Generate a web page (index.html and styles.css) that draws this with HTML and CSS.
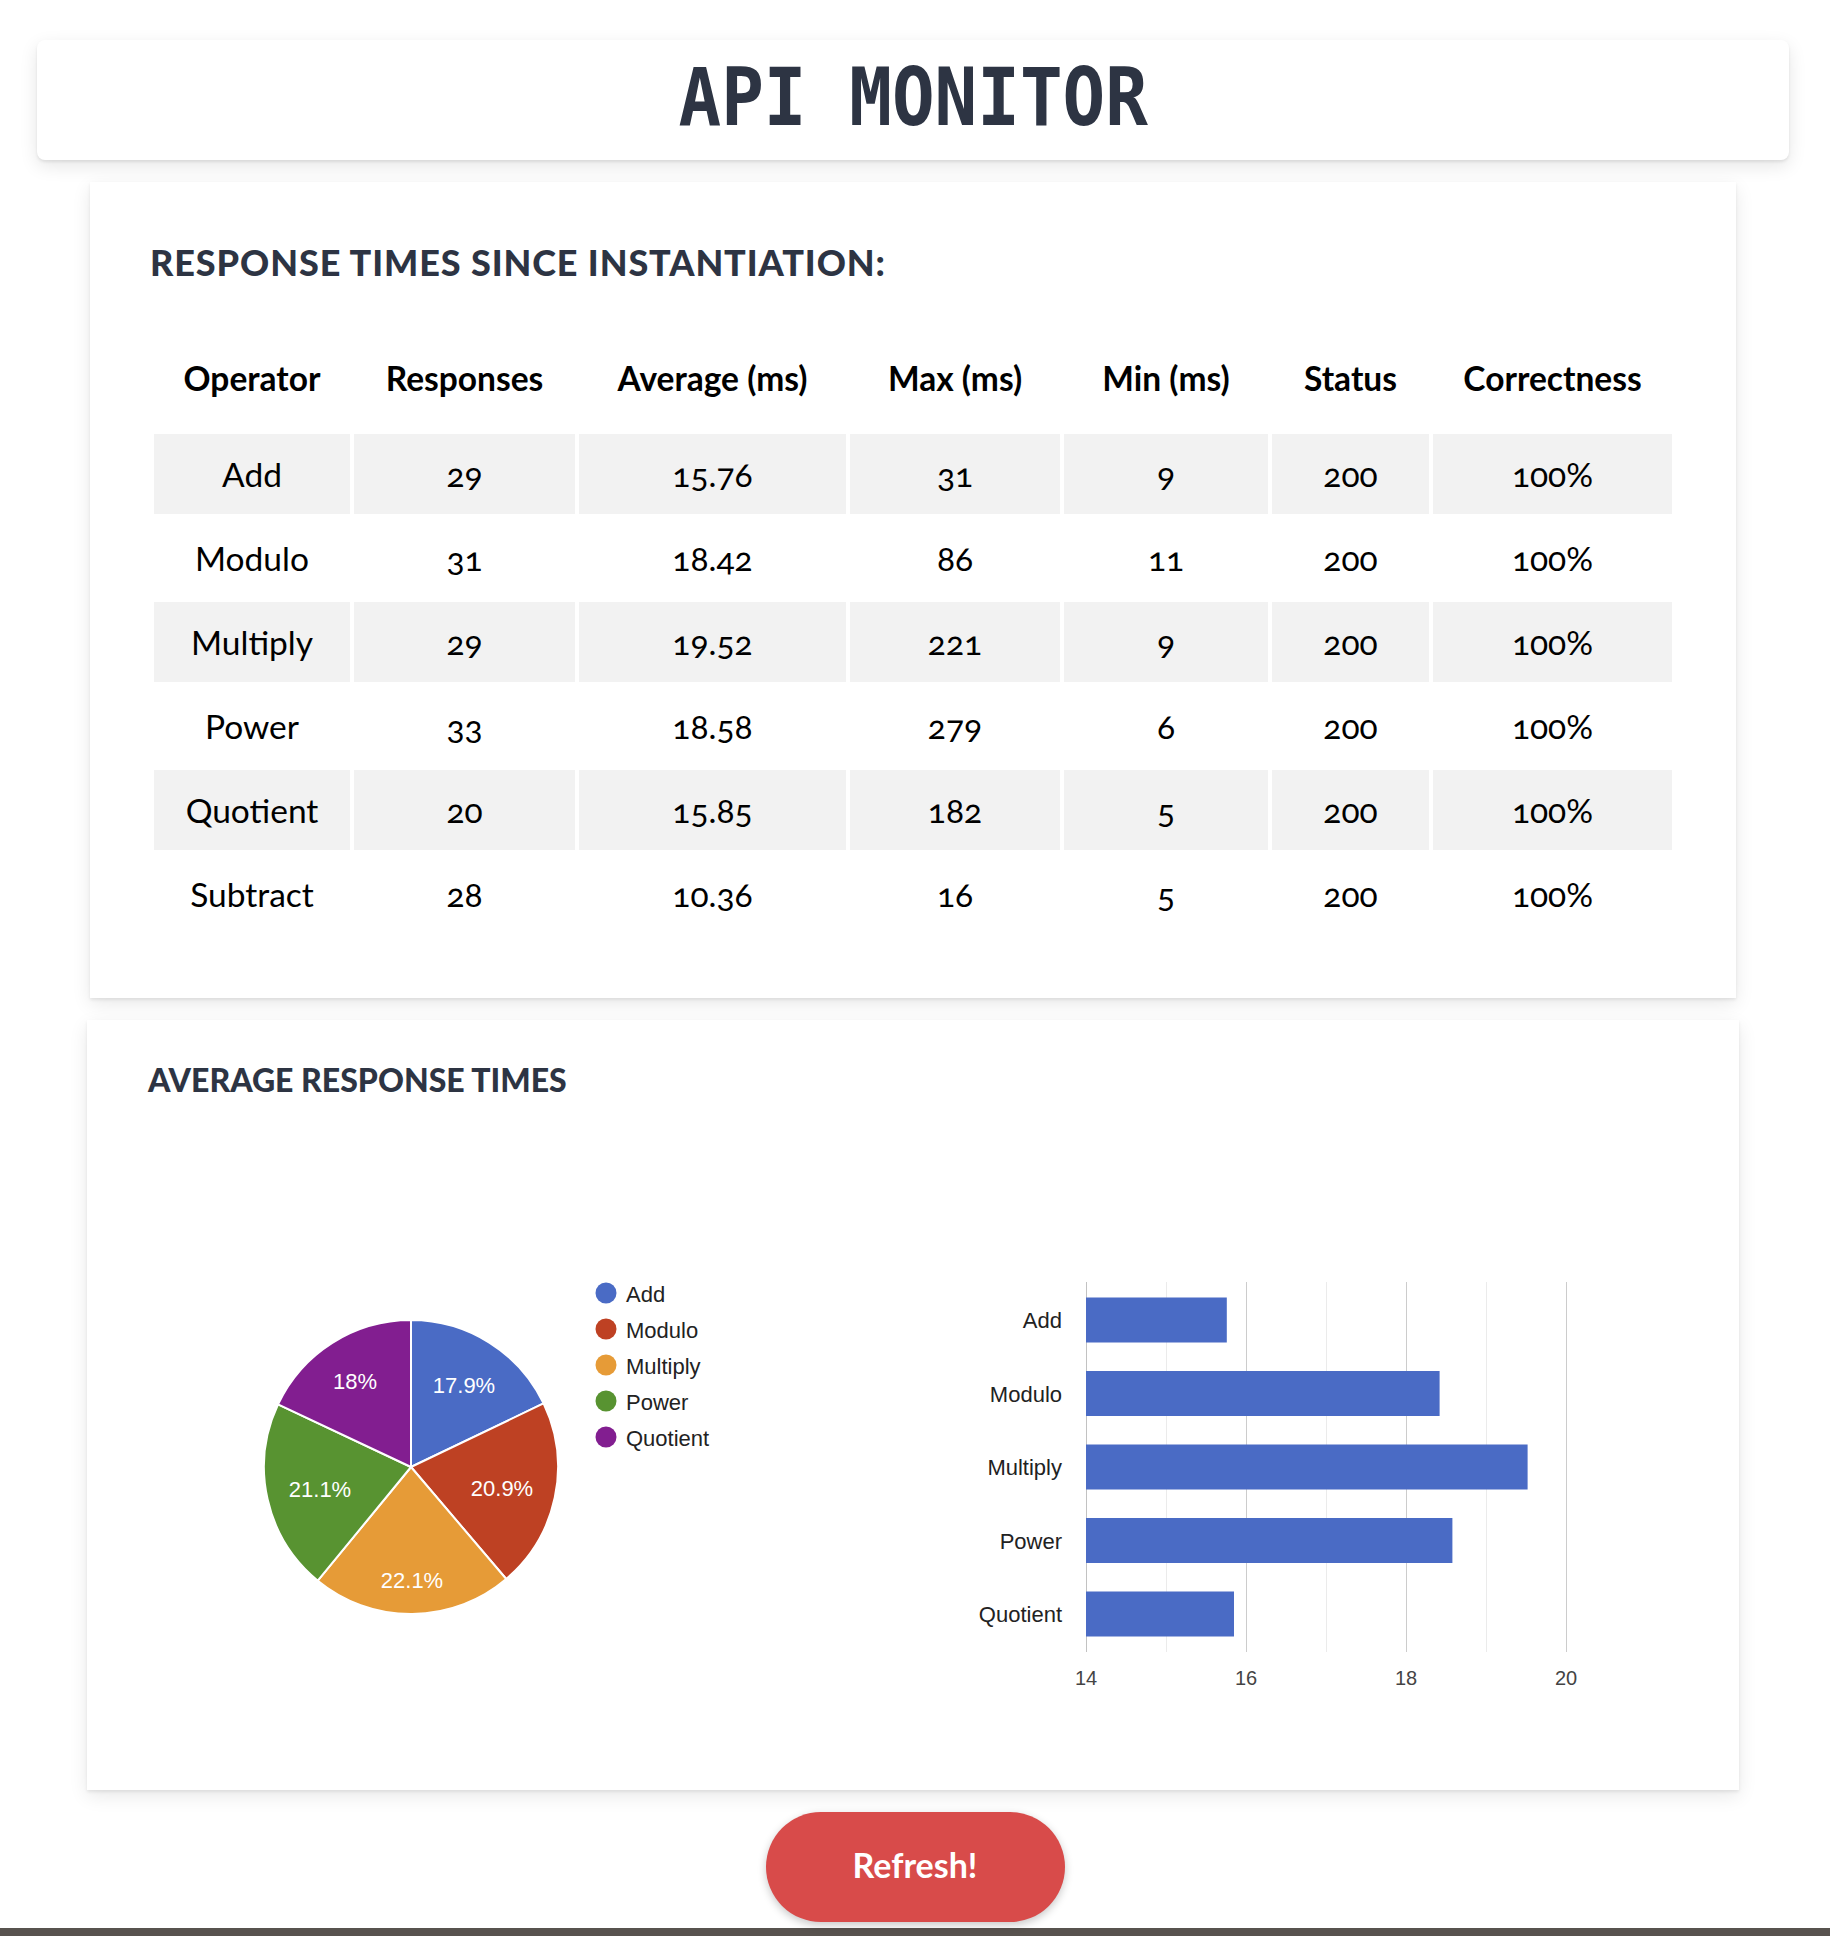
FILE: index.html
```html
<!DOCTYPE html>
<html lang="en">
<head>
<meta charset="utf-8">
<title>API Monitor</title>
<link rel="stylesheet" href="styles.css">
</head>
<body>
<header class="top-card">
  <h1 class="title"><span class="title-text">API MONITOR</span></h1>
</header>

<section class="card card-table">
  <h2 class="section-title wide">RESPONSE TIMES SINCE INSTANTIATION:</h2>
  <table class="stats">
    <colgroup>
      <col class="c1"><col class="c2"><col class="c3"><col class="c4"><col class="c5"><col class="c6"><col class="c7">
    </colgroup>
    <thead>
      <tr><th>Operator</th><th>Responses</th><th>Average (ms)</th><th>Max (ms)</th><th>Min (ms)</th><th>Status</th><th>Correctness</th></tr>
    </thead>
    <tbody>
      <tr><td>Add</td><td>29</td><td>15.76</td><td>31</td><td>9</td><td>200</td><td>100%</td></tr>
      <tr><td>Modulo</td><td>31</td><td>18.42</td><td>86</td><td>11</td><td>200</td><td>100%</td></tr>
      <tr><td>Multiply</td><td>29</td><td>19.52</td><td>221</td><td>9</td><td>200</td><td>100%</td></tr>
      <tr><td>Power</td><td>33</td><td>18.58</td><td>279</td><td>6</td><td>200</td><td>100%</td></tr>
      <tr><td>Quotient</td><td>20</td><td>15.85</td><td>182</td><td>5</td><td>200</td><td>100%</td></tr>
      <tr><td>Subtract</td><td>28</td><td>10.36</td><td>16</td><td>5</td><td>200</td><td>100%</td></tr>
    </tbody>
  </table>
</section>

<section class="card card-charts">
  <h2 class="section-title small">AVERAGE RESPONSE TIMES</h2>
  <div class="chart-row">
    <svg class="chart pie" width="620" height="520" viewBox="0 0 620 520">
      <g stroke="#ffffff" stroke-width="2" stroke-linejoin="round">
        <path d="M263 267 L263 120 A147 147 0 0 1 395.55 203.44 Z" fill="#4a6bc5"/>
        <path d="M263 267 L395.55 203.44 A147 147 0 0 1 358.23 378.98 Z" fill="#be4123"/>
        <path d="M263 267 L358.23 378.98 A147 147 0 0 1 169.77 380.66 Z" fill="#e69b37"/>
        <path d="M263 267 L169.77 380.66 A147 147 0 0 1 130.05 204.28 Z" fill="#589331"/>
        <path d="M263 267 L130.05 204.28 A147 147 0 0 1 263 120 Z" fill="#821e90"/>
      </g>
      <g class="slice-label">
        <text x="316" y="193">17.9%</text>
        <text x="354" y="296">20.9%</text>
        <text x="264" y="388">22.1%</text>
        <text x="172" y="297">21.1%</text>
        <text x="207" y="189">18%</text>
      </g>
      <g class="legend">
        <circle cx="458" cy="93" r="10.5" fill="#4a6bc5"/>
        <text x="478" y="101.5">Add</text>
        <circle cx="458" cy="129" r="10.5" fill="#be4123"/>
        <text x="478" y="137.5">Modulo</text>
        <circle cx="458" cy="165" r="10.5" fill="#e69b37"/>
        <text x="478" y="173.5">Multiply</text>
        <circle cx="458" cy="201" r="10.5" fill="#589331"/>
        <text x="478" y="209.5">Power</text>
        <circle cx="458" cy="237" r="10.5" fill="#821e90"/>
        <text x="478" y="245.5">Quotient</text>
      </g>
    </svg>
    <svg class="chart bar" width="880" height="520" viewBox="0 0 880 520">
      <g stroke-width="1">
        <line x1="398.5" y1="82" x2="398.5" y2="452" stroke="#ebebeb"/>
        <line x1="558.5" y1="82" x2="558.5" y2="452" stroke="#ebebeb"/>
        <line x1="718.5" y1="82" x2="718.5" y2="452" stroke="#ebebeb"/>
        <line x1="478.5" y1="82" x2="478.5" y2="452" stroke="#cccccc"/>
        <line x1="638.5" y1="82" x2="638.5" y2="452" stroke="#cccccc"/>
        <line x1="798.5" y1="82" x2="798.5" y2="452" stroke="#cccccc"/>
        <line x1="318.5" y1="82" x2="318.5" y2="452" stroke="#c2c2c2"/>
      </g>
      <g fill="#4a6bc5">
        <rect x="318" y="97.5" width="140.8" height="45"/>
        <rect x="318" y="171" width="353.6" height="45"/>
        <rect x="318" y="244.5" width="441.6" height="45"/>
        <rect x="318" y="318" width="366.4" height="45"/>
        <rect x="318" y="391.5" width="148" height="45"/>
      </g>
      <g class="cat-label">
        <text x="294" y="128">Add</text>
        <text x="294" y="201.5">Modulo</text>
        <text x="294" y="275">Multiply</text>
        <text x="294" y="348.5">Power</text>
        <text x="294" y="422">Quotient</text>
      </g>
      <g class="axis-label">
        <text x="318" y="485">14</text>
        <text x="478" y="485">16</text>
        <text x="638" y="485">18</text>
        <text x="798" y="485">20</text>
      </g>
    </svg>
  </div>
</section>

<div class="actions">
  <button class="refresh" type="button">Refresh!</button>
</div>

<footer class="footer"></footer>
</body>
</html>
```

FILE: styles.css
```css
* {
  box-sizing: border-box;
}

html, body {
  margin: 0;
  padding: 0;
}

body {
  background: #ffffff;
  font-family: "Lato", "Open Sans", sans-serif;
  color: #000;
}

.top-card {
  margin: 40px 41px 0 37px;
  height: 120px;
  background: #fff;
  border-radius: 8px;
  box-shadow: 0 2px 3px rgba(0, 0, 0, 0.08), 0 6px 18px rgba(0, 0, 0, 0.10);
  text-align: center;
}

.title {
  margin: 0;
  padding-bottom: 6px;
  height: 120px;
  line-height: 114px;
  font-family: "DejaVu Sans Mono", "Liberation Mono", monospace;
  font-weight: bold;
  font-size: 81px;
  color: #2d3443;
}

.title-text {
  display: inline-block;
  transform: scaleX(0.875);
  white-space: pre;
}

.card {
  background: #fff;
  box-shadow: 0 2px 3px rgba(0, 0, 0, 0.08), 0 6px 18px rgba(0, 0, 0, 0.09);
}

.card-table {
  margin: 22px 94px 0 90px;
  padding: 59px 60px 60px 60px;
}

.card-charts {
  margin: 22px 91px 0 87px;
  padding: 41px 60px 70px 61px;
}

.section-title {
  margin: 0 0 38px 0;
  font-family: "Lato", sans-serif;
  font-weight: 900;
  font-size: 36px;
  line-height: 43px;
  color: #2d3443;
  letter-spacing: 0;
}

.section-title.wide {
  letter-spacing: 0.9px;
}

.section-title.small {
  font-size: 32px;
  line-height: 38px;
  margin-bottom: 101px;
}

.stats {
  width: 100%;
  table-layout: fixed;
  border-collapse: separate;
  border-spacing: 4px;
  font-family: "Lato", "Open Sans", sans-serif;
  font-size: 33.5px;
  font-variant-numeric: oldstyle-nums;
  color: #000;
}

.c1 { width: 196px; }
.c2 { width: 221px; }
.c3 { width: 267px; }
.c4 { width: 210px; }
.c5 { width: 204px; }
.c6 { width: 157px; }
.c7 { width: auto; }

.stats th {
  height: 104px;
  padding: 0;
  font-weight: bold;
  text-align: center;
  vertical-align: middle;
}

.stats td {
  height: 80px;
  padding: 0;
  font-weight: normal;
  text-align: center;
  vertical-align: middle;
}

.stats tbody tr:nth-child(odd) td {
  background: #f2f2f2;
}

.chart-row {
  display: flex;
  height: 520px;
}

.chart {
  display: block;
  flex: none;
}

.chart text {
  font-family: "Liberation Sans", Arial, sans-serif;
}

.slice-label text {
  fill: #ffffff;
  font-size: 22px;
  text-anchor: middle;
}

.legend text {
  fill: #222222;
  font-size: 22px;
}

.cat-label text {
  fill: #222222;
  font-size: 22px;
  text-anchor: end;
}

.axis-label text {
  fill: #444444;
  font-size: 20px;
  text-anchor: middle;
}

.actions {
  margin-top: 22px;
  height: 110px;
  display: flex;
  justify-content: center;
}

.refresh {
  width: 299px;
  height: 110px;
  padding: 0 0 6px 0;
  border: none;
  border-radius: 55px;
  background: #d84b4a;
  color: #ffffff;
  font-family: "Lato", "Open Sans", sans-serif;
  font-weight: bold;
  font-size: 34px;
  box-shadow: 0 3px 8px rgba(0, 0, 0, 0.22);
  cursor: pointer;
}

.footer {
  margin-top: 6px;
  height: 8px;
  background: #58534f;
}
```
